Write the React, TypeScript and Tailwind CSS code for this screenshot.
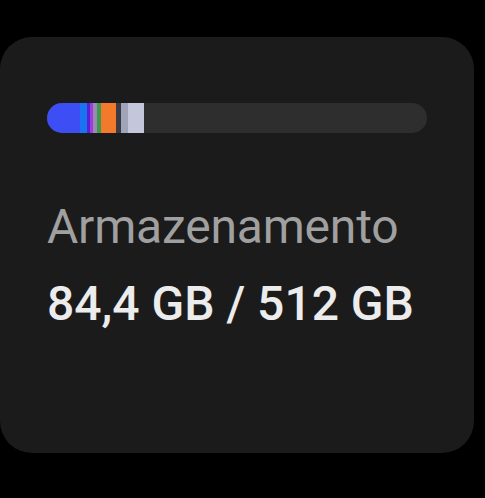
const segments = [
  { w: 33, c: "bg-[#3d4ef5]" },
  { w: 7, c: "bg-[#1a73f0]" },
  { w: 3, c: "bg-[#5a1fd0]" },
  { w: 3, c: "bg-[#9a3ee0]" },
  { w: 4, c: "bg-[#9a8ab0]" },
  { w: 4, c: "bg-[#3a9a50]" },
  { w: 15, c: "bg-[#f27a2a]" },
  { w: 5, c: "bg-[#3a3a45]" },
  { w: 7, c: "bg-[#a0a4b8]" },
  { w: 16, c: "bg-[#c4c6dc]" },
];

export default function App() {
  return (
    <div className="w-[485px] h-[498px] bg-black pt-[37px] font-['Roboto',sans-serif]">
      <div className="w-[474px] h-[416px] rounded-[32px] bg-[#1b1b1b] px-[47px] pt-[66px]">
        {/* Storage bar */}
        <div className="flex h-[30px] w-[380px] overflow-hidden rounded-full bg-[#2e2e2e]">
          {segments.map((s, i) => (
            <div key={i} className={`h-full ${s.c}`} style={{ width: s.w }} />
          ))}
        </div>

        <div className="mt-[66px] text-[48px] leading-[56px] tracking-[-0.2px] text-[#a0a0a0]">Armazenamento</div>
        <div className="mt-[21px] text-[48px] leading-[56px] font-medium whitespace-nowrap text-[#ececec]">84,4 GB / 512 GB</div>
      </div>
    </div>
  );
}
